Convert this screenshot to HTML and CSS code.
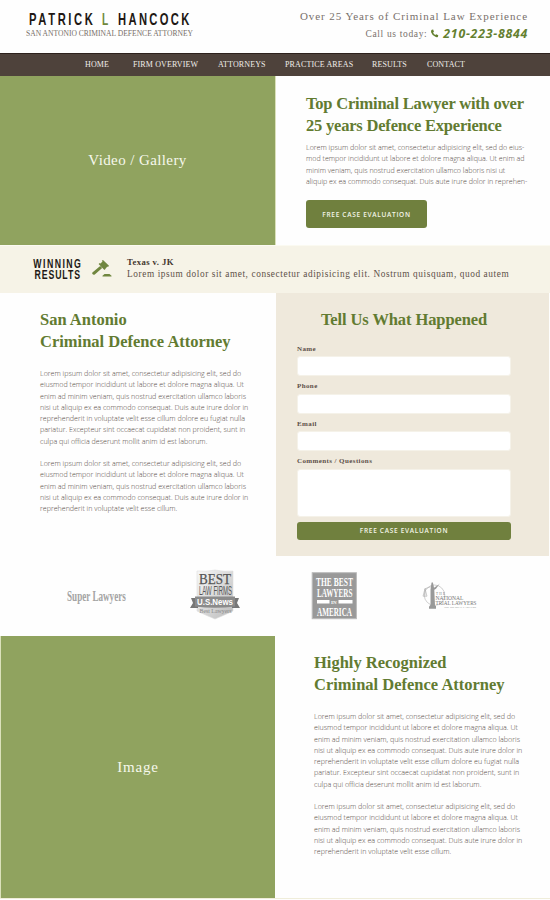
FILE: index.html
```html
<!DOCTYPE html>
<html lang="en">
<head>
<meta charset="utf-8">
<title>Patrick L Hancock</title>
<link rel="stylesheet" href="styles.css">
</head>
<body>
<header class="header">
  <svg class="brand" viewBox="0 0 180 32">
    <g class="condensed brand-name">
      <text transform="translate(9 18.3) scale(.68 1)" textLength="94">PATRICK</text>
      <text class="accent" transform="translate(82 18.3) scale(.62 1)">L</text>
      <text transform="translate(98 18.3) scale(.68 1)" textLength="105">HANCOCK</text>
    </g>
    <text class="brand-sub" x="6" y="29.3" textLength="167" lengthAdjust="spacingAndGlyphs">SAN ANTONIO CRIMINAL DEFENCE ATTORNEY</text>
  </svg>
  <div class="contact">
    <p class="tagline">Over 25 Years of Criminal Law Experience</p>
    <p class="call"><span class="call-label">Call us today:</span>
      <svg class="phone" viewBox="0 0 10 10"><path d="M2 .8 3.5.5 4.4 3 3.4 3.9Q4.2 5.7 5.9 6.6L6.9 5.7 9.2 7 8.8 8.6Q8 9.5 6.5 9 2.5 7.6 1.2 3.5.8 1.7 2 .8Z"/></svg>
      <strong class="number">210-223-8844</strong></p>
  </div>
</header>
<nav class="nav">
  <a class="n1">HOME</a><a class="n2">FIRM OVERVIEW</a><a class="n3">ATTORNEYS</a><a class="n4">PRACTICE AREAS</a><a class="n5">RESULTS</a><a class="n6">CONTACT</a>
</nav>
<section class="hero">
  <div class="media">Video / Gallery</div>
  <div class="intro">
    <h1 class="title">Top Criminal Lawyer with over<br>25 years Defence Experience</h1>
    <p class="copy">Lorem ipsum dolor sit amet, consectetur adipisicing elit, sed do eius-<br>mod tempor incididunt ut labore et dolore magna aliqua. Ut enim ad<br>minim veniam, quis nostrud exercitation ullamco laboris nisi ut<br>aliquip ex ea commodo consequat. Duis aute irure dolor in reprehen-</p>
    <button class="button">FREE CASE EVALUATION</button>
  </div>
</section>
<section class="results">
  <svg class="winning condensed" viewBox="0 0 50 24">
    <text transform="translate(.3 10.5) scale(.7 1)" textLength="68">WINNING</text>
    <text transform="translate(1.5 22.4) scale(.7 1)" textLength="65">RESULTS</text>
  </svg>
  <svg class="gavel" viewBox="0 0 20 18"><path d="M8 4 11 1 16 6 13 9Z"/><path d="M9.8.8 11 0 17 5.8 16 7ZM6.6 4 7.8 2.9 13.7 8.8 12.4 10Z"/><path d="M8.2 6.1 10.2 8 2.8 14.5Q1.3 15.2.5 14T1 12Z"/><path d="M10.5 16.5V15.8L12.5 14H17.5L19.5 15.8V16.5Z"/></svg>
  <div class="case"><h2 class="case-name">Texas v. JK</h2><p class="case-text">Lorem ipsum dolor sit amet, consectetur adipisicing elit. Nostrum quisquam, quod autem</p></div>
</section>
<section class="main">
  <article class="about">
    <h2 class="title">San Antonio<br>Criminal Defence Attorney</h2>
    <p class="copy">Lorem ipsum dolor sit amet, consectetur adipisicing elit, sed do<br>eiusmod tempor incididunt ut labore et dolore magna aliqua. Ut<br>enim ad minim veniam, quis nostrud exercitation ullamco laboris<br>nisi ut aliquip ex ea commodo consequat. Duis aute irure dolor in<br>reprehenderit in voluptate velit esse cillum dolore eu fugiat nulla<br>pariatur. Excepteur sint occaecat cupidatat non proident, sunt in<br>culpa qui officia deserunt mollit anim id est laborum.</p>
    <p class="copy">Lorem ipsum dolor sit amet, consectetur adipisicing elit, sed do<br>eiusmod tempor incididunt ut labore et dolore magna aliqua. Ut<br>enim ad minim veniam, quis nostrud exercitation ullamco laboris<br>nisi ut aliquip ex ea commodo consequat. Duis aute irure dolor in<br>reprehenderit in voluptate velit esse cillum.</p>
  </article>
  <form class="form">
    <h2 class="title form-title">Tell Us What Happened</h2>
    <label class="label" for="name">Name</label><input class="field" id="name">
    <label class="label" for="phone">Phone</label><input class="field" id="phone">
    <label class="label" for="email">Email</label><input class="field" id="email">
    <label class="label" for="comments">Comments / Questions</label><textarea class="field area" id="comments"></textarea>
    <button class="button submit" type="button">FREE CASE EVALUATION</button>
  </form>
</section>
<section class="awards">
  <svg class="awards-art" viewBox="0 0 550 80">
    <text class="super" transform="translate(67 44.7) scale(.6 1)" textLength="98" lengthAdjust="spacingAndGlyphs">Super Lawyers</text>
    <defs><linearGradient id="shield" x2="1" y2="1"><stop stop-color="#f8f8f8"/><stop offset="1" stop-color="#bbb"/></linearGradient></defs>
    <path d="M197 15Q206 16 215 14 224 16 233 15V55Q227 58 215 63 203 58 197 55Z" fill="url(#shield)" stroke="#ddd" stroke-width=".6"/>
    <g fill="#555">
      <text x="199" y="28.3" font-size="14" textLength="32" lengthAdjust="spacingAndGlyphs" stroke="#555" stroke-width=".25">BEST</text>
      <text class="sans" x="199" y="39.3" font-size="12" textLength="33" lengthAdjust="spacingAndGlyphs">LAW FIRMS</text>
      <path d="M191 42H198V52H190L193 47ZM232 42H239L237 47 240 52H232Z" fill="#777"/>
      <path d="M195 40.5H235V50.5Q215 53 195 50.5Z" fill="#8b8b8b"/>
      <text class="sans" x="197" y="48.8" font-size="8.5" font-weight="700" fill="#fff" textLength="36" lengthAdjust="spacingAndGlyphs">U.S.News</text>
      <text x="199.5" y="57" font-size="7" fill="#888" textLength="32" lengthAdjust="spacingAndGlyphs">Best Lawyers</text>
    </g>
    <rect x="312.2" y="16.7" width="44.2" height="46" fill="#999" stroke="#bbb"/>
    <g class="america" transform="translate(0 4)">
      <text x="316" y="25.5" textLength="37" lengthAdjust="spacingAndGlyphs">THE BEST</text>
      <text x="317" y="37" textLength="35.5" lengthAdjust="spacingAndGlyphs">LAWYERS</text>
      <path d="M317 40H329.5V43.6H317ZM338.5 40H352.5V43.6H338.5Z"/>
      <text x="331" y="43.6" class="in">IN</text>
      <text x="317" y="55.8" textLength="35" lengthAdjust="spacingAndGlyphs">AMERICA</text>
    </g>
    <g transform="translate(0 3.7)">
      <circle cx="434.5" cy="35.5" r="10.2" fill="none" stroke="#bbb" stroke-width=".7"/>
      <path d="M431.5 23Q432.5 22 433.2 24L434 28 438.5 25 440 23.5 436 29 434.3 30 435 46H436V49H429V47L430.5 45 430.5 30Z" fill="#999"/>
      <path d="M431 27 425 29V36M423 36.5H427M423 36.5 425 29 427 36.5" fill="none" stroke="#aaa" stroke-width=".6"/>
      <g class="trial">
        <text x="436" y="35.3" font-size="3.4" textLength="9">THE</text>
        <text x="435.5" y="40.7" font-size="6.4" textLength="28" lengthAdjust="spacingAndGlyphs">NATIONAL</text>
        <text x="435.5" y="45.7" font-size="6.4" textLength="41" lengthAdjust="spacingAndGlyphs">TRIAL LAWYERS</text>
        <text x="444" y="48.5" font-size="2.9" textLength="32" lengthAdjust="spacingAndGlyphs">TOP 100 TRIAL LAWYERS</text>
      </g>
    </g>
  </svg>
</section>
<section class="recognized">
  <div class="media image">Image</div>
  <article class="about">
    <h2 class="title">Highly Recognized<br>Criminal Defence Attorney</h2>
    <p class="copy">Lorem ipsum dolor sit amet, consectetur adipisicing elit, sed do<br>eiusmod tempor incididunt ut labore et dolore magna aliqua. Ut<br>enim ad minim veniam, quis nostrud exercitation ullamco laboris<br>nisi ut aliquip ex ea commodo consequat. Duis aute irure dolor in<br>reprehenderit in voluptate velit esse cillum dolore eu fugiat nulla<br>pariatur. Excepteur sint occaecat cupidatat non proident, sunt in<br>culpa qui officia deserunt mollit anim id est laborum.</p>
    <p class="copy">Lorem ipsum dolor sit amet, consectetur adipisicing elit, sed do<br>eiusmod tempor incididunt ut labore et dolore magna aliqua. Ut<br>enim ad minim veniam, quis nostrud exercitation ullamco laboris<br>nisi ut aliquip ex ea commodo consequat. Duis aute irure dolor in<br>reprehenderit in voluptate velit esse cillum.</p>
  </article>
</section>
</body>
</html>
```
FILE: styles.css
```css
* { box-sizing: border-box; }
body { margin: 0; width: 550px; height: 900px; overflow: hidden; background: #fefefe; font-family: "Liberation Serif", serif; color: #5d5048; }
h1, h2, p { margin: 0; white-space: nowrap; }
text { white-space: pre; }
.condensed { font-family: "Liberation Sans Narrow", "Liberation Sans", sans-serif; font-weight: 700; fill: #211814; }
.header { height: 53px; display: flex; justify-content: space-between; padding: 7px 22px 0 20px; }
.brand { width: 180px; height: 32px; }
.brand-name { font-size: 16.5px; }
.accent { fill: #6f873b; }
.brand-sub { font-size: 7.3px; fill: #776e68; }
.contact { text-align: right; color: #78706b; }
.tagline { font-size: 11px; line-height: 13px; letter-spacing: .93px; margin: 3px 0 0 0; }
.call { display: flex; justify-content: flex-end; align-items: center; height: 17px; margin-top: 2px; }
.call-label { font-size: 9.5px; letter-spacing: .65px; }
.phone { width: 9px; height: 9px; margin: 0 4px 0 3px; fill: #64802f; }
.number { font: italic 700 12.3px "Open Sans", sans-serif; letter-spacing: .75px; color: #64802f; }
.nav { height: 23px; border-top: 1px solid #2d211c; background: #4e423b; display: flex; color: #f1eeea; font-size: 8px; letter-spacing: .13px; line-height: 21px; padding-left: 85px; white-space: nowrap; }
.n1 { width: 48px; } .n2 { width: 85px; } .n3 { width: 67px; } .n4 { width: 87px; } .n5 { width: 55px; }
.hero { height: 169px; display: grid; grid-template-columns: 275px 275px; }
.media { background: #90a35f; color: #f6f8ec; font-size: 15px; letter-spacing: .4px; display: flex; align-items: center; justify-content: center; }
.intro { padding: 17px 0 0 30px; border-left: 1px solid #dbe1bb; }
.title { font-size: 16.5px; line-height: 22px; font-weight: 700; color: #627b31; }
.intro .title { letter-spacing: -.2px; }
.copy { font: 300 7.12px/11.3px "Open Sans", sans-serif; color: #574c46; }
.intro .copy { margin-top: 5px; }
.button { display: block; border: 0; border-radius: 3px; background: #70803e; color: #f4f6e8; font: 600 6.5px "Open Sans", sans-serif; letter-spacing: .7px; padding: 0; }
.intro .button { width: 121px; height: 28px; margin-top: 13px; }
.results { height: 48px; border-top: 1px solid #fbfaf1; background: #f6f3e7; display: flex; padding: 11px 0 0 33px; }
.winning { width: 50px; height: 24px; font-size: 12.5px; overflow: visible; }
.gavel { width: 20px; height: 18px; margin: 3px 0 0 9px; fill: #70863f; }
.case { margin-left: 15px; }
.case-name { font-size: 8.7px; line-height: 11px; letter-spacing: .4px; color: #43362e; }
.case-text { font-size: 9.3px; line-height: 13px; letter-spacing: .59px; }
.main { height: 263px; display: grid; grid-template-columns: 276px 273px; }
.about { padding: 16px 0 0 40px; }
.about .copy { margin: 15px 0 -4px; }
.form { background: #efe9dc; padding: 16px 38px 0 21px; }
.form-title { text-align: center; letter-spacing: -.1px; }
.label { display: block; font-size: 7px; line-height: 9px; letter-spacing: .4px; font-weight: 700; margin: 6px 0 2.5px; }
.form-title + .label { margin-top: 14px; margin-bottom: 2px; }
.field { display: block; width: 214px; height: 20px; border: 1px solid #f5f2e9; border-radius: 3px; background: #fff; resize: none; padding: 0; margin: 0; }
.area { height: 48px; }
.submit { width: 214px; height: 18px; margin-top: 5px; }
.awards { height: 80px; }
.awards-art { display: block; width: 550px; height: 80px; font-family: "Liberation Serif", serif; }
.super { font-size: 15px; font-weight: 700; fill: #a4a4a4; }
.sans { font-family: "Liberation Sans", sans-serif; }
.america { font-size: 13px; font-weight: 700; fill: #fff; }
.america .in { font-size: 5px; }
.trial { fill: #777; }
.recognized { height: 263px; display: grid; grid-template-columns: 275px 275px; border-bottom: 1px solid #efedda; }
.recognized .about { padding-left: 39px; }
.image { border-left: 1px solid #dbe1bb; letter-spacing: .8px; }
```
